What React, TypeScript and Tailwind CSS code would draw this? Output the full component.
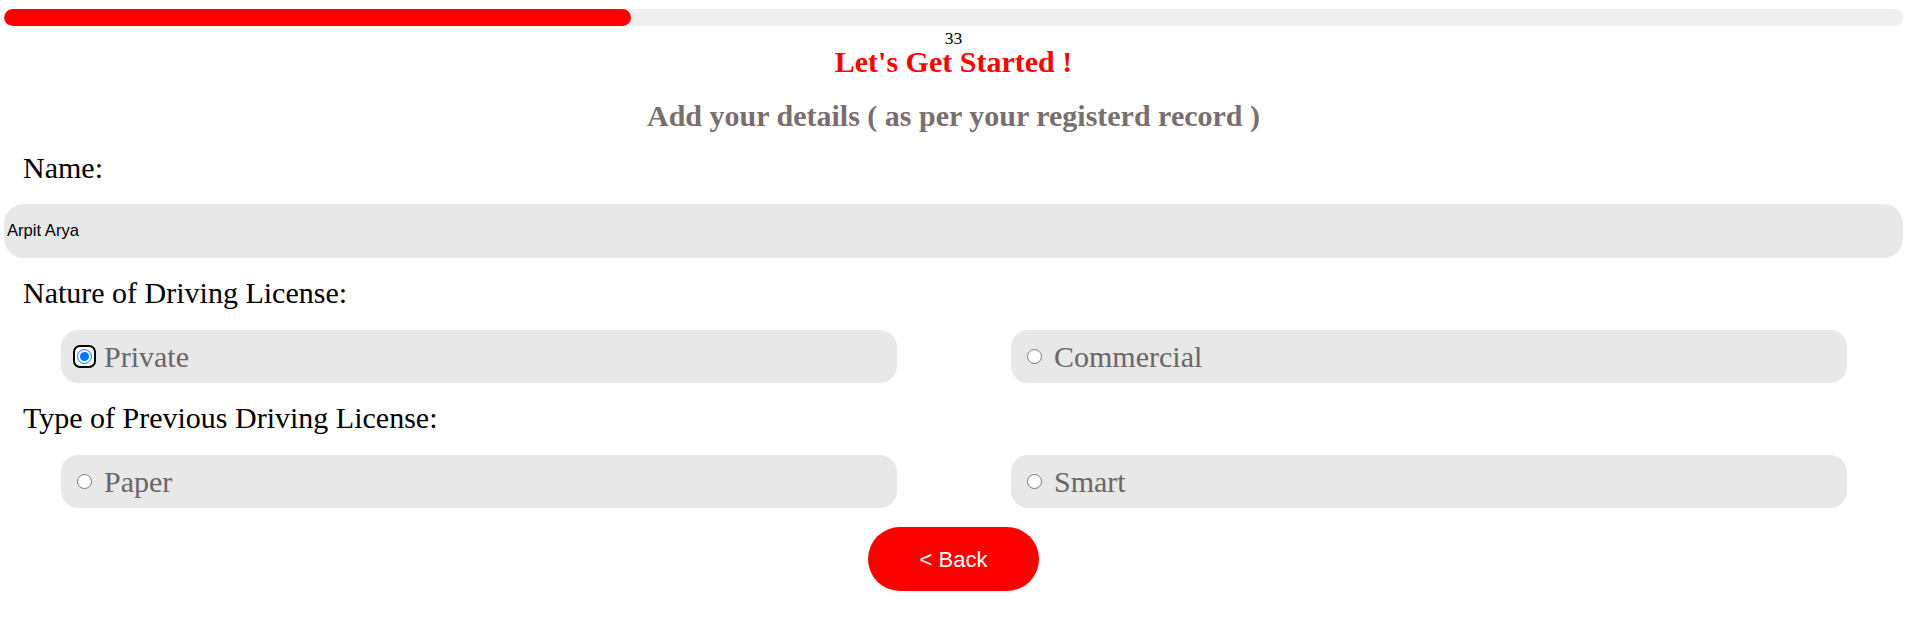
import { useState } from "react"

const serif = "font-['Liberation_Serif','Times_New_Roman',serif]"
const sans = "font-['Liberation_Sans',Arial,sans-serif]"

type OptionProps = {
  name: string
  value: string
  label: string
  checked: boolean
  focused?: boolean
  onPick: (v: string) => void
}

function Option({ name, value, label, checked, focused, onPick }: OptionProps) {
  return (
    <label className="flex h-[53px] w-[836px] cursor-pointer items-center rounded-[17px] bg-[#e8e8e8] pl-[12px]">
      <span
        className={
          focused
            ? "flex h-[23px] w-[23px] items-center justify-center rounded-[7px] border-2 border-black bg-white"
            : "flex h-[23px] w-[23px] items-center justify-center"
        }
      >
        <input
          type="radio"
          name={name}
          value={value}
          checked={checked}
          onChange={() => onPick(value)}
          className="m-0 h-[15px] w-[15px] outline-none"
        />
      </span>
      <span className={`${serif} ml-[8px] text-[30px] leading-[34px] text-[#6b6666]`}>{label}</span>
    </label>
  )
}

export default function App() {
  const [name, setName] = useState("Arpit Arya")
  const [nature, setNature] = useState("private")
  const [kind, setKind] = useState("")
  const progress = 33

  return (
    <div className="min-h-screen bg-white pl-[4px] pr-[10px]">
      <div className="mt-[9px] h-[17px] w-full overflow-hidden rounded-full bg-[#efefef]">
        <div className="h-full rounded-full bg-[#ff0000]" style={{ width: `${progress}%` }} />
      </div>

      <p className={`${serif} mt-[3px] text-center text-[17.5px] leading-[18px] text-black`}>{progress}</p>
      <h2 className={`${serif} text-center text-[30px] font-bold leading-[30px] text-[#ff0000]`}>
        Let's Get Started !
      </h2>
      <h3 className={`${serif} mt-[24px] text-center text-[30px] font-bold leading-[30px] text-[#7a6e6e]`}>
        Add your details ( as per your registerd record )
      </h3>

      <form onSubmit={(e) => e.preventDefault()}>
        <label htmlFor="name" className={`${serif} mt-[22px] block pl-[19px] text-[30px] leading-[30px] text-black`}>
          Name:
        </label>
        <input
          id="name"
          type="text"
          value={name}
          onChange={(e) => setName(e.target.value)}
          className={`${sans} mt-[21px] block h-[54px] w-full rounded-[20px] bg-[#e8e8e8] pl-[3px] text-[16.6px] text-black outline-none`}
        />

        <p className={`${serif} mt-[20px] pl-[19px] text-[30px] leading-[30px] text-black`}>Nature of Driving License:</p>
        <div className="mt-[22px] flex gap-[114px] pl-[57px]">
          <Option name="nature" value="private" label="Private" checked={nature === "private"} focused onPick={setNature} />
          <Option name="nature" value="commercial" label="Commercial" checked={nature === "commercial"} onPick={setNature} />
        </div>

        <p className={`${serif} mt-[20px] pl-[19px] text-[30px] leading-[30px] text-black`}>
          Type of Previous Driving License:
        </p>
        <div className="mt-[22px] flex gap-[114px] pl-[57px]">
          <Option name="kind" value="paper" label="Paper" checked={kind === "paper"} onPick={setKind} />
          <Option name="kind" value="smart" label="Smart" checked={kind === "smart"} onPick={setKind} />
        </div>

        <div className="mt-[19px] flex justify-center">
          <button
            type="button"
            className={`${sans} h-[64px] w-[171px] rounded-full bg-[#ff0000] text-[22px] text-white`}
          >
            &lt; Back
          </button>
        </div>
      </form>
    </div>
  )
}
